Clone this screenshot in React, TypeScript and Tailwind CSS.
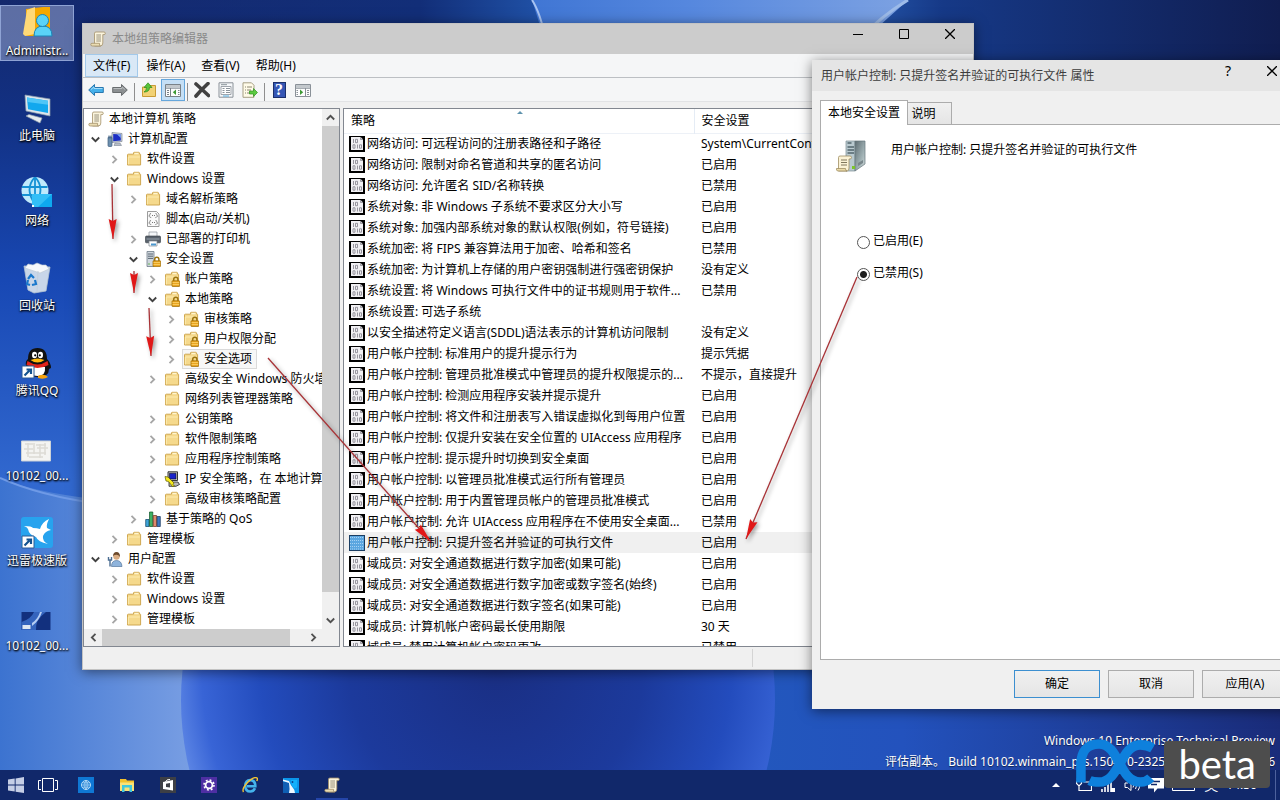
import { useState } from 'react'
import type { ReactNode } from 'react'
import clsx from 'clsx'

type IconName =
  | 'scroll'
  | 'computer'
  | 'user'
  | 'folder'
  | 'folderLock'
  | 'script'
  | 'printer'
  | 'server'
  | 'ipsec'
  | 'chart'

interface TreeNode {
  level: number
  label: string
  icon: IconName
  state?: 'open' | 'closed'
  selected?: boolean
}

const TREE: TreeNode[] = [
  { level: 0, label: '本地计算机 策略', icon: 'scroll' },
  { level: 1, label: '计算机配置', icon: 'computer', state: 'open' },
  { level: 2, label: '软件设置', icon: 'folder', state: 'closed' },
  { level: 2, label: 'Windows 设置', icon: 'folder', state: 'open' },
  { level: 3, label: '域名解析策略', icon: 'folder', state: 'closed' },
  { level: 3, label: '脚本(启动/关机)', icon: 'script' },
  { level: 3, label: '已部署的打印机', icon: 'printer', state: 'closed' },
  { level: 3, label: '安全设置', icon: 'server', state: 'open' },
  { level: 4, label: '帐户策略', icon: 'folderLock', state: 'closed' },
  { level: 4, label: '本地策略', icon: 'folderLock', state: 'open' },
  { level: 5, label: '审核策略', icon: 'folderLock', state: 'closed' },
  { level: 5, label: '用户权限分配', icon: 'folderLock', state: 'closed' },
  { level: 5, label: '安全选项', icon: 'folderLock', state: 'closed', selected: true },
  { level: 4, label: '高级安全 Windows 防火墙', icon: 'folder', state: 'closed' },
  { level: 4, label: '网络列表管理器策略', icon: 'folder' },
  { level: 4, label: '公钥策略', icon: 'folder', state: 'closed' },
  { level: 4, label: '软件限制策略', icon: 'folder', state: 'closed' },
  { level: 4, label: '应用程序控制策略', icon: 'folder', state: 'closed' },
  { level: 4, label: 'IP 安全策略，在 本地计算机', icon: 'ipsec', state: 'closed' },
  { level: 4, label: '高级审核策略配置', icon: 'folder', state: 'closed' },
  { level: 3, label: '基于策略的 QoS', icon: 'chart', state: 'closed' },
  { level: 2, label: '管理模板', icon: 'folder', state: 'closed' },
  { level: 1, label: '用户配置', icon: 'user', state: 'open' },
  { level: 2, label: '软件设置', icon: 'folder', state: 'closed' },
  { level: 2, label: 'Windows 设置', icon: 'folder', state: 'closed' },
  { level: 2, label: '管理模板', icon: 'folder', state: 'closed' },
]

const INDENT = ['pl-[3px]', 'pl-1', 'pl-[23px]', 'pl-[42px]', 'pl-[61px]', 'pl-[80px]']

const POLICIES: [string, string][] = [
  ['网络访问: 可远程访问的注册表路径和子路径', 'System\\CurrentControlSet'],
  ['网络访问: 限制对命名管道和共享的匿名访问', '已启用'],
  ['网络访问: 允许匿名 SID/名称转换', '已禁用'],
  ['系统对象: 非 Windows 子系统不要求区分大小写', '已启用'],
  ['系统对象: 加强内部系统对象的默认权限(例如，符号链接)', '已启用'],
  ['系统加密: 将 FIPS 兼容算法用于加密、哈希和签名', '已禁用'],
  ['系统加密: 为计算机上存储的用户密钥强制进行强密钥保护', '没有定义'],
  ['系统设置: 将 Windows 可执行文件中的证书规则用于软件...', '已禁用'],
  ['系统设置: 可选子系统', ''],
  ['以安全描述符定义语言(SDDL)语法表示的计算机访问限制', '没有定义'],
  ['用户帐户控制: 标准用户的提升提示行为', '提示凭据'],
  ['用户帐户控制: 管理员批准模式中管理员的提升权限提示的...', '不提示，直接提升'],
  ['用户帐户控制: 检测应用程序安装并提示提升', '已启用'],
  ['用户帐户控制: 将文件和注册表写入错误虚拟化到每用户位置', '已启用'],
  ['用户帐户控制: 仅提升安装在安全位置的 UIAccess 应用程序', '已启用'],
  ['用户帐户控制: 提示提升时切换到安全桌面', '已启用'],
  ['用户帐户控制: 以管理员批准模式运行所有管理员', '已启用'],
  ['用户帐户控制: 用于内置管理员帐户的管理员批准模式', '已启用'],
  ['用户帐户控制: 允许 UIAccess 应用程序在不使用安全桌面...', '已禁用'],
  ['用户帐户控制: 只提升签名并验证的可执行文件', '已启用'],
  ['域成员: 对安全通道数据进行数字加密(如果可能)', '已启用'],
  ['域成员: 对安全通道数据进行数字加密或数字签名(始终)', '已启用'],
  ['域成员: 对安全通道数据进行数字签名(如果可能)', '已启用'],
  ['域成员: 计算机帐户密码最长使用期限', '30 天'],
  ['域成员: 禁用计算机帐户密码更改', '已禁用'],
]
const SELECTED_POLICY = 19

/* ---------- small icons (16px) ---------- */

function Icon16({ children }: { children: ReactNode }) {
  return (
    <svg viewBox="0 0 16 16" className="h-4 w-4 shrink-0" aria-hidden="true">
      {children}
    </svg>
  )
}

function ScrollGlyph() {
  return (
    <>
      <path d="M4.5 2.2Q4.5 1 6 1H14q1.3 0 1.3 1.3T14 3.6h-1.2V12q0 3-2.6 3H4.5V2.2Z" fill="#fbf4dc" stroke="#a3906a" strokeWidth=".8" />
      <path d="M2 12.3h7.6q-.6 2.7 1 2.7H2.5Q.8 15 .8 13.6T2 12.3Z" fill="#eadcb2" stroke="#a3906a" strokeWidth=".8" />
      <path d="M6.3 4h4.7M6.3 6h4.7M6.3 8h4.7M6.3 10h4.7" stroke="#8d8672" strokeWidth=".9" />
    </>
  )
}

function FolderGlyph() {
  return (
    <>
      <path d="M1.5 14V4q0-.8.8-.8H7.5V2q0-.7.7-.7h4.5q.7 0 .7.7V3h.6q.6 0 .6.6V14Z" fill="#f5d98c" stroke="#cfa751" />
      <path d="M8.500 2.500h4" stroke="#fff5cf" strokeWidth="1.400" />
      <path d="M2.300 13.300V6h11.500" fill="none" stroke="#fdebb0" />
    </>
  )
}

function LockGlyph() {
  return (
    <>
      <path d="M9.700 10V8.500q0-2.200 2.100-2.200t2.100 2.200V10" fill="none" stroke="#9b7411" strokeWidth="1.500" />
      <rect x="8" y="9.800" width="7.600" height="5.700" rx=".5" fill="#e9a51e" stroke="#9c6a05" strokeWidth=".7" />
      <path d="M8.500 11.500h6.600M8.500 13.500h6.600" stroke="#ffd978" strokeWidth=".7" />
    </>
  )
}

function TreeIcon({ name }: { name: IconName }) {
  switch (name) {
    case 'scroll':
      return <Icon16><ScrollGlyph /></Icon16>
    case 'folder':
      return <Icon16><FolderGlyph /></Icon16>
    case 'folderLock':
      return <Icon16><FolderGlyph /><LockGlyph /></Icon16>
    case 'computer':
      return (
        <Icon16>
          <path d="M5 1.500 15 2.500V10.500L5 11.500Z" fill="#c9cfd8" stroke="#7c8694" strokeWidth=".7" />
          <path d="M6.200 3 13.800 3.500V9.500L6.200 10.200Z" fill="#1c2fc4" />
          <path d="M10 3.200 13.800 3.500V7Z" fill="#7fa8f5" />
          <path d="M8 12h5l1.500 2.500H7Z" fill="#b8bec8" stroke="#7c8694" strokeWidth=".6" />
          <rect x="1" y="6" width="4" height="9.500" rx="1" fill="#6d8fae" stroke="#3f5f80" strokeWidth=".7" />
          <path d="M2 4.500v3M4 4.500v3" stroke="#3f5f80" />
        </Icon16>
      )
    case 'user':
      return (
        <Icon16>
          <path d="M4.500 15.500q0-6 5-6t5.500 6Z" fill="#8fb4dc" stroke="#56779e" strokeWidth=".7" />
          <circle cx="9.500" cy="5.500" r="3.200" fill="#d9ac82" />
          <path d="M6 5.500Q6 1 9.500 1T13 6q-1.500-2.500-4-2.300T6 5.500Z" fill="#6d4a2c" />
          <path d="M1.500 6v3h3V6M3 9v6.500" fill="none" stroke="#4b6d92" strokeWidth="1.400" />
        </Icon16>
      )
    case 'script':
      return (
        <Icon16>
          <path d="M2.500.5h9l2.500 2.500v12.500H2.500Z" fill="#fafafa" stroke="#9c9c9c" />
          <path d="M7 4.500h3M7 11.500h3" stroke="#777" strokeDasharray="1 1" />
          <path d="M6 2.500q-1.500 0-1.200 1T4 4.700t.8 1.200T6 7M10.500 2.500q1.500 0 1.200 1t.8 1.200-.8 1.200-1.200 1.100M6 9.500q-1.500 0-1.200 1T4 11.700t.8 1.200T6 14M10.500 9.500q1.500 0 1.200 1t.8 1.200-.8 1.200-1.200 1.100" fill="none" stroke="#777" strokeWidth=".8" />
        </Icon16>
      )
    case 'printer':
      return (
        <Icon16>
          <path d="M4 1h8v5H4Z" fill="#f5f7f9" stroke="#8d949c" strokeWidth=".7" />
          <path d="M.5 6q0-1 1-1h13q1 0 1 1v5q0 .8-.8.8H1.300q-.8 0-.8-.8Z" fill="#59626c" stroke="#333a42" strokeWidth=".6" />
          <path d="M1.500 8h13" stroke="#9aa3ad" />
          <path d="M4 10h8v5H4Z" fill="#fff" stroke="#7f8791" strokeWidth=".7" />
          <path d="M6 12.500h5v2H6Z" fill="#4b97cf" />
        </Icon16>
      )
    case 'server':
      return (
        <Icon16>
          <path d="M2 .5h7v15H2Z" fill="#cfd6dc" stroke="#6f7c88" strokeWidth=".8" />
          <path d="M3 3h5M3 5.200h5M3 7.400h5" stroke="#4d5a66" strokeWidth=".9" />
          <circle cx="4" cy="13" r=".8" fill="#5cb04a" />
          <LockGlyph />
        </Icon16>
      )
    case 'ipsec':
      return (
        <Icon16>
          <path d="M4 .8h9.500V9.500H4Z" fill="#c6c6c6" stroke="#222" strokeWidth=".9" />
          <path d="M5.500 2.300H12V8H5.500Z" fill="#1a23c9" stroke="#000" strokeWidth=".5" />
          <path d="M5 11h9l1.500 2.500L12 15.300H5Z" fill="#b9b9b9" stroke="#222" strokeWidth=".8" />
          <path d="m1 5.500 3 .5 6 6-1 1.500 1.500 1.500-2 .5-4-5-2.500-.5Z" fill="#f7ea1f" stroke="#5d5900" strokeWidth=".7" />
        </Icon16>
      )
    case 'chart':
      return (
        <Icon16>
          <path d="M.7 8.500h3.300v7H.7Z" fill="#3fa7d8" stroke="#0d3f66" strokeWidth=".7" />
          <path d="M4.500 1h3.300v14.500H4.500Z" fill="#3fb264" stroke="#0c5227" strokeWidth=".7" />
          <path d="M8.300 4.500h3.300v11H8.300Z" fill="#dd8a6d" stroke="#6b2b17" strokeWidth=".7" />
          <path d="M12.100 5.500h3.200v10h-3.200Z" fill="#3c78c4" stroke="#123058" strokeWidth=".7" />
        </Icon16>
      )
  }
}

function PolicyIcon({ selected }: { selected: boolean }) {
  return (
    <svg viewBox="0 0 16 16" className="h-4 w-4 shrink-0" aria-hidden="true">
      <path d="M0 0h16v16H0Z" fill={selected ? '#1b3e63' : '#000'} />
      {selected ? (
        <>
          <path d="M1 1h14v14H1Z" fill="#5ba6e0" />
          <path d="M1 2.500h14M1 5.500h14M1 8.500h14M1 11.500h14M1 14h14" stroke="#a7d2f3" strokeDasharray="1 1" />
        </>
      ) : (
        <>
          <path d="M2 1h9.500L14 3.500V14H2Z" fill="#f1f0f3" />
          <path d="M11.500 1v2.500H14" fill="#c3c1c8" stroke="#77757d" strokeWidth=".6" />
          <path d="M4.500 3v4M6.500 3.300h2v3.400h-2ZM4 8.800h2v3.400H4ZM8.500 8.500v4M10.500 8.800h2v3.400h-2Z" fill="none" stroke="#8c8a94" strokeWidth=".9" />
        </>
      )}
    </svg>
  )
}

function Chevron({ dir, className }: { dir: 'up' | 'down' | 'left' | 'right'; className?: string }) {
  const d = {
    up: 'M.8 6.500 4.500 2.800 8.200 6.500',
    down: 'M.8 2.500 4.500 6.200 8.200 2.500',
    left: 'M6.500.8 2.800 4.500 6.500 8.200',
    right: 'M2.500.8l3.700 3.700L2.500 8.200',
  }[dir]
  return (
    <svg viewBox="0 0 9 9" className={clsx('h-[9px] w-[9px]', className)} aria-hidden="true">
      <path d={d} fill="none" stroke="currentColor" strokeWidth="1.800" />
    </svg>
  )
}

/* ---------- toolbar ---------- */

function ToolButton({ label, active, children }: { label: string; active?: boolean; children: ReactNode }) {
  return (
    <button
      type="button"
      aria-label={label}
      className={clsx(
        'flex h-[22px] w-6 items-center justify-center border',
        active ? 'border-[#66a7dc] bg-[#c5dff5]' : 'border-transparent',
      )}
    >
      {children}
    </button>
  )
}

function ToolSeparator() {
  return (
    <span className="flex h-[18px] w-[5px] justify-center">
      <span className="w-px bg-[#8f8f8f]" />
    </span>
  )
}

function Toolbar() {
  return (
    <div className="flex h-6 shrink-0 items-end border-b border-[#e2e3e5] bg-[#f5f6f7] pl-px">
      <ToolButton label="后退">
        <Icon16>
          <path d="M.7 8 6.500 2.500v3H15.300v5H6.500v3Z" fill="#45b0ea" stroke="#1b6da8" strokeWidth=".9" />
          <path d="M3 7.500 6 5v1.500h8.500" fill="none" stroke="#a5dcf8" />
        </Icon16>
      </ToolButton>
      <ToolButton label="前进">
        <Icon16>
          <path d="M15.300 8 9.500 2.500v3H.7v5h8.800v3Z" fill="#8c9092" stroke="#5f6365" strokeWidth=".9" />
          <path d="M13 7.500 10 5v1.500H1.500" fill="none" stroke="#b9bdbf" />
        </Icon16>
      </ToolButton>
      <ToolSeparator />
      <ToolButton label="上移">
        <Icon16>
          <path d="M1.500 14.500V5H7l1-1.500h6.500v11Z" fill="#f2d274" stroke="#c89b35" />
          <path d="M3 10q2.500-1 2.500-4.500H3L7 .8 11 5.500H8.500Q8.500 10 3 10Z" fill="#58c43a" stroke="#2b8a18" strokeWidth=".7" />
        </Icon16>
      </ToolButton>
      <ToolButton label="显示/隐藏控制台树" active>
        <Icon16>
          <path d="M.5 2.500h15v12H.5Z" fill="#fdfdfd" stroke="#7a8288" />
          <path d="M1 4h14M1 6.200h14" stroke="#8a939b" strokeWidth="1.200" />
          <path d="M5.500 6v8.500" stroke="#7a8288" />
          <path d="M2 8.500h2M2 10.500h2M2 12.500h2M13 8.500h1.500M13 10.500h1.500M13 12.500h1.500" stroke="#7a8288" />
          <path d="M11 7.500v5.500L7.800 10.200Z" fill="#3d9a34" />
        </Icon16>
      </ToolButton>
      <ToolSeparator />
      <ToolButton label="删除">
        <Icon16>
          <path d="M2 2q5 4.500 12.500 11.500M14 1.500Q7 8 2 14" fill="none" stroke="#414141" strokeWidth="3.600" strokeLinecap="round" />
        </Icon16>
      </ToolButton>
      <ToolButton label="属性">
        <Icon16>
          <path d="M1 .8h14v14.400H1Z" fill="#f6f8fa" stroke="#8a9198" />
          <path d="M3 4.500h10v8H3Z" fill="#fff" stroke="#8a9198" strokeWidth=".8" />
          <path d="M3 2.700h6M4.500 6.500h2M8 6.500h4M4.500 8.500h2M8 8.500h4M4.500 10.500h2M8 10.500h4" stroke="#6d7780" strokeWidth=".8" />
          <path d="M5 14h6" stroke="#56aee0" />
        </Icon16>
      </ToolButton>
      <ToolButton label="导出列表">
        <Icon16>
          <path d="M1 .8h8.500L12 3.300v12H1Z" fill="#fffbe8" stroke="#a69f84" />
          <path d="M3 5h1M5 5h5M3 8h1M5 8h4M3 11h1M5 11h4" stroke="#8b8671" />
          <path d="M7.500 9h4V6.500l4 4-4 4V12h-4Z" fill="#5ccb42" stroke="#2e921d" strokeWidth=".7" />
        </Icon16>
      </ToolButton>
      <ToolSeparator />
      <ToolButton label="帮助">
        <span className="flex h-4 w-[13px] items-center justify-center border border-[#1b2f6b] bg-[#3556b4] font-['Liberation_Serif',serif] text-base leading-4 font-bold text-white">
          ?
        </span>
      </ToolButton>
      <ToolButton label="显示/隐藏操作窗格">
        <Icon16>
          <path d="M.5 2.500h15v12H.5Z" fill="#fdfdfd" stroke="#8a9198" />
          <path d="M1 4h14M1 6.200h14" stroke="#8a939b" strokeWidth="1.200" />
          <path d="M10.500 6v8.500" stroke="#8a9198" />
          <path d="M12 8.500h2M12 10.500h2M12 12.500h2M1.500 8.500H3M1.500 10.500H3M1.500 12.500H3" stroke="#8a9198" />
          <path d="M5 7.500v5.500l3.200-2.800Z" fill="#3d9a34" />
        </Icon16>
      </ToolButton>
    </div>
  )
}

/* ---------- main window ---------- */

function TreePane() {
  return (
    <div className="flex w-[257px] shrink-0 flex-col border border-[#828790] bg-white">
      <div className="flex min-h-0 flex-1">
        <ul className="min-w-0 flex-1 overflow-hidden">
          {TREE.map((node, i) => (
            <li key={i} className={clsx('flex h-5 items-center whitespace-nowrap', INDENT[node.level])}>
              {node.level > 0 && (
                <span className="flex w-[18px] shrink-0 items-center pl-[3px]">
                  {node.state === 'open' && <Chevron dir="down" className="text-[#404040]" />}
                  {node.state === 'closed' && <Chevron dir="right" className="text-[#a6a6a6]" />}
                </span>
              )}
              <span
                className={clsx(
                  'flex h-5 items-center gap-[5px] border pr-1',
                  node.selected ? 'border-[#dadada] bg-[#f7f7f7]' : 'border-transparent',
                )}
              >
                <TreeIcon name={node.icon} />
                {node.label}
              </span>
            </li>
          ))}
        </ul>
        <div className="flex w-[17px] shrink-0 flex-col items-center bg-[#f0f0f0] text-[#505050]">
          <span className="flex h-[17px] items-center"><Chevron dir="up" /></span>
          <span className="min-h-0 w-full flex-[466] bg-[#cdcdcd]" />
          <span className="flex-[20]" />
          <span className="flex h-[17px] items-center"><Chevron dir="down" /></span>
        </div>
      </div>
      <div className="flex h-[17px] shrink-0 items-center bg-[#f0f0f0] pr-[17px] text-[#505050]">
        <span className="flex w-[18px] justify-center"><Chevron dir="left" /></span>
        <span className="h-full w-[188px] bg-[#cdcdcd]" />
        <span className="flex-1" />
        <span className="flex w-[17px] justify-center"><Chevron dir="right" /></span>
      </div>
    </div>
  )
}

function PolicyList() {
  return (
    <div className="relative min-w-0 flex-1 overflow-hidden border border-[#828790] bg-white">
      <table className="w-full table-fixed border-collapse text-left whitespace-nowrap">
        <colgroup>
          <col className="w-[350px]" />
          <col />
        </colgroup>
        <thead>
          <tr className="h-6 border-b border-[#edf1f7]">
            <th className="border-r border-[#e5ecf5] pl-[7px] font-normal">策略</th>
            <th className="pl-[7px] font-normal">安全设置</th>
          </tr>
        </thead>
        <tbody>
          {POLICIES.map(([name, value], i) => (
            <tr key={name} className={clsx('h-[21px]', i === SELECTED_POLICY && 'bg-[#f0f0f0]')}>
              <td className="pl-[5px]">
                <span className="flex items-center gap-0.5">
                  <PolicyIcon selected={i === SELECTED_POLICY} />
                  {name}
                </span>
              </td>
              <td className="pl-[7px]">{value}</td>
            </tr>
          ))}
        </tbody>
      </table>
      <svg viewBox="0 0 6 3" className="absolute top-0.5 left-[173px] h-[3px] w-1.5" aria-hidden="true">
        <path d="M0 3 3 0l3 3Z" fill="#5f93ad" />
      </svg>
    </div>
  )
}

function EditorWindow() {
  return (
    <section
      aria-label="本地组策略编辑器"
      className="absolute top-[23px] right-[306px] bottom-[130px] left-[82px] flex flex-col border border-[#c3c3c3] bg-[#f0f0f0] shadow-[0_2px_12px_rgba(0,0,0,0.5)]"
    >
      <header className="flex h-[30px] shrink-0 items-start justify-between bg-[#cccccc]">
        <div className="flex h-[30px] items-center gap-1.5 pl-[7px] text-[#8a8a8a]">
          <TreeIcon name="scroll" />
          本地组策略编辑器
        </div>
        <div className="flex h-5 text-black">
          <button type="button" aria-label="最小化" className="flex w-[46px] items-center justify-center">
            <svg viewBox="0 0 10 10" className="h-2.5 w-2.5"><path d="M0 5.500h10" stroke="currentColor" /></svg>
          </button>
          <button type="button" aria-label="最大化" className="flex w-[46px] items-center justify-center">
            <svg viewBox="0 0 10 10" className="h-2.5 w-2.5"><path d="M.5.5h9v9h-9Z" fill="none" stroke="currentColor" /></svg>
          </button>
          <button type="button" aria-label="关闭" className="flex w-[46px] items-center justify-center">
            <svg viewBox="0 0 10 10" className="h-2.5 w-2.5"><path d="m0 0 10 10M10 0 0 10" stroke="currentColor" strokeWidth="1.300" /></svg>
          </button>
        </div>
      </header>
      <nav className="flex h-6 shrink-0 border-b border-[#bcbfc3] bg-[#f5f6f7] pl-0.5">
        {['文件(F)', '操作(A)', '查看(V)', '帮助(H)'].map((item, i) => (
          <button
            key={item}
            type="button"
            className={clsx('border px-[7px]', i === 0 ? 'border-[#a3c9ea] bg-[#d9e8f6]' : 'border-transparent')}
          >
            {item}
          </button>
        ))}
      </nav>
      <Toolbar />
      <div className="mt-1.5 flex min-h-0 flex-1 gap-[3px]">
        <TreePane />
        <PolicyList />
      </div>
      <footer className="flex h-[22px] shrink-0 justify-end py-0.5">
        <span className="w-[221px] border-l border-[#d4d4d4]" />
      </footer>
    </section>
  )
}

/* ---------- properties dialog ---------- */

function ServerIcon() {
  return (
    <svg viewBox="0 0 32 32" className="h-8 w-8 shrink-0" aria-hidden="true">
      <defs>
        <linearGradient id="serverSide" x1="0" x2="1" y1="0" y2="1">
          <stop offset="0" stopColor="#5d6c72" />
          <stop offset=".6" stopColor="#9fb0b3" />
          <stop offset="1" stopColor="#d3dcdd" />
        </linearGradient>
      </defs>
      <path d="M10 1h9v30h-9Z" fill="#b9c9cf" stroke="#7c8d94" strokeWidth=".7" />
      <path d="M19 1h10v23l-10 7Z" fill="url(#serverSide)" stroke="#66757b" strokeWidth=".7" />
      <path d="M11.500 3h4M11.500 7h6.500M11.500 10h6.500M11.500 13h6.500" stroke="#53656e" strokeWidth="1.300" />
      <path d="M22 26v-3l5-3v3Z" fill="#78868b" />
      <path d="M16 26h3v3h-3Z" fill="#7cc52a" />
      <path d="M2.500 17.500q0-1.500 1.500-1.500h10q1.500 0 1.500 1.500T14 19h-1v9q0 3-2 3H2.500Z" fill="#fbf2d5" stroke="#a08e62" strokeWidth=".8" />
      <path d="M.5 28.500h9q0 2.500 1.500 2.500H1.500Q0 30 .5 28.500Z" fill="#ead9a6" stroke="#a08e62" strokeWidth=".8" />
      <path d="M5 20h6M5 22.500h6M5 25h6" stroke="#80775c" />
    </svg>
  )
}

function PropertiesDialog() {
  const [choice, setChoice] = useState('disabled')
  const options = [
    { id: 'enabled', label: '已启用(E)' },
    { id: 'disabled', label: '已禁用(S)' },
  ]
  return (
    <section
      role="dialog"
      aria-label="属性"
      className="absolute top-[60px] -right-4 bottom-[91px] left-[812px] flex flex-col bg-[#f0f0f0] shadow-[0_2px_12px_rgba(0,0,0,0.5)]"
    >
      <header className="flex h-[31px] shrink-0 items-start justify-between bg-[#e5e5e5]">
        <h2 className="pl-[9px] leading-[31px] text-[#3c3c3c]">用户帐户控制: 只提升签名并验证的可执行文件 属性</h2>
        <div className="flex h-[22px] text-black">
          <button type="button" aria-label="帮助" className="w-10 text-sm leading-[22px]">?</button>
          <button type="button" aria-label="关闭" className="flex w-12 items-center justify-center">
            <svg viewBox="0 0 10 10" className="h-2.5 w-2.5"><path d="m0 0 10 10M10 0 0 10" stroke="currentColor" strokeWidth="1.300" /></svg>
          </button>
        </div>
      </header>
      <div role="tablist" className="flex items-end px-2 pt-[9px]">
        <button type="button" role="tab" aria-selected="true" className="relative -mb-px h-[25px] w-[88px] border border-b-0 border-[#acacac] bg-white">
          本地安全设置
        </button>
        <button type="button" role="tab" aria-selected="false" className="h-[22px] w-11 border border-b-0 border-l-0 border-[#acacac] bg-linear-to-b from-[#f0f0f0] to-[#e5e5e5] pr-3">
          说明
        </button>
      </div>
      <div role="tabpanel" className="mx-2 flex-1 border border-[#acacac] bg-white pt-[15px]">
        <div className="flex gap-[23px] pl-[15px]">
          <ServerIcon />
          <p className="leading-5">用户帐户控制: 只提升签名并验证的可执行文件</p>
        </div>
        <div role="radiogroup" className="mt-[61px] flex flex-col items-start gap-4 pl-9">
          {options.map((o) => (
            <label key={o.id} className="flex h-4 items-center gap-[3px]">
              <input
                type="radio"
                name="policy"
                value={o.id}
                checked={choice === o.id}
                onChange={() => setChoice(o.id)}
                className="mt-0.5 h-[13px] w-[13px] appearance-none rounded-full border border-[#555] bg-white checked:bg-[radial-gradient(circle,#1e1e1e_3px,#fff_4px)]"
              />
              {o.label}
            </label>
          ))}
        </div>
      </div>
      <div className="flex justify-end gap-2 px-2 pt-2.5 pb-[11px]">
        {['确定', '取消', '应用(A)'].map((label, i) => (
          <button
            key={label}
            type="button"
            className={clsx(
              'h-7 w-[86px] border bg-linear-to-b from-[#f0f0f0] to-[#e5e5e5]',
              i === 0 ? 'border-[#3c8fd0]' : 'border-[#acacac]',
            )}
          >
            {label}
          </button>
        ))}
      </div>
    </section>
  )
}

/* ---------- desktop ---------- */

function Wallpaper() {
  return (
    <svg viewBox="0 0 1280 800" preserveAspectRatio="none" className="absolute inset-0 h-full w-full" aria-hidden="true">
      <defs>
        <linearGradient id="sky" x1="0" x2="0" y1="0" y2="1">
          <stop offset="0" stopColor="#14286c" />
          <stop offset=".15" stopColor="#123184" />
          <stop offset=".35" stopColor="#1848b4" />
          <stop offset=".6" stopColor="#3168cf" />
          <stop offset="1" stopColor="#3a70cf" />
        </linearGradient>
        <linearGradient id="skyTop" x1="0" x2="1" y1="0" y2="0">
          <stop offset="0" stopColor="#14307c" stopOpacity="0" />
          <stop offset=".75" stopColor="#122e78" />
          <stop offset="1" stopColor="#2257ae" />
        </linearGradient>
        <linearGradient id="beam" x1="0" x2="1" y1="0" y2="0">
          <stop offset="0" stopColor="#4076d4" />
          <stop offset=".4" stopColor="#5587de" />
          <stop offset="1" stopColor="#7da2e2" />
        </linearGradient>
        <linearGradient id="night" x1="0" x2="1" y1="0" y2="0">
          <stop offset="0" stopColor="#2b62b8" />
          <stop offset=".25" stopColor="#163987" />
          <stop offset="1" stopColor="#101d50" />
        </linearGradient>
        <linearGradient id="mist" x1="0" x2="1" y1="0" y2="0">
          <stop offset="0" stopColor="#3c73d0" />
          <stop offset="1" stopColor="#7ba0e4" />
        </linearGradient>
        <linearGradient id="east" x1="0" x2="1" y1="0" y2="0">
          <stop offset="0" stopColor="#2259bd" />
          <stop offset=".35" stopColor="#2352bd" />
          <stop offset="1" stopColor="#1a2c7a" />
        </linearGradient>
        <radialGradient id="orb" cx=".53" cy=".45" r=".55">
          <stop offset="0" stopColor="#1a2f84" />
          <stop offset=".45" stopColor="#1c3a9c" />
          <stop offset=".72" stopColor="#234cbd" />
          <stop offset=".9" stopColor="#3864d6" />
          <stop offset="1" stopColor="#6089e6" />
        </radialGradient>
      </defs>
      <path d="M0 0h1280v800H0Z" fill="url(#sky)" />
      <path d="M0 0h560v60H0Z" fill="url(#skyTop)" />
      <path d="M532 0h380l-80 90H560Z" fill="url(#beam)" />
      <path d="M532 0q8 12 14 40" fill="none" stroke="#a7c3f2" strokeWidth="2" />
      <path d="M908 0h372v400H830V70Z" fill="url(#night)" />
      <path d="M908 0q-24 14-50 40" fill="none" stroke="#9dbbe9" strokeWidth="3" />
      <path d="M0 478q50 22 200 30v292H0Z" fill="url(#mist)" />
      <path d="M0 478q40 18 100 26" fill="none" stroke="#6f9ae6" strokeWidth="2" />
      <path d="M700 640h580v160H700Z" fill="url(#east)" />
      <circle cx="478" cy="700" r="297" fill="url(#orb)" />
    </svg>
  )
}

function Shortcut() {
  return (
    <>
      <path d="M1 19h12v12H1Z" fill="#fff" stroke="#2a5b95" />
      <path d="m3.500 28.500 5-5M5.500 22.500h4.500V27" fill="none" stroke="#14528f" strokeWidth="2.200" />
    </>
  )
}

const DESKTOP_ICONS: { label: string; selected?: boolean; art: ReactNode }[] = [
  {
    label: 'Administr...',
    selected: true,
    art: (
      <>
        <path d="M5 2 22 0h7v27l-4 2H5Z" fill="#f5a800" />
        <path d="M2 27 6 3l8-3v27l-10 2Z" fill="#ffd977" />
        <path d="M13 29q0-10 9-10t9 10Z" fill="#5ad3f7" stroke="#1a86b8" />
        <circle cx="21.500" cy="13.500" r="6" fill="#5ad3f7" stroke="#1a86b8" />
      </>
    ),
  },
  {
    label: '此电脑',
    art: (
      <>
        <path d="m4 3 25 4v17L5 19Z" fill="#dce5ec" stroke="#8b9cab" strokeWidth=".7" />
        <path d="m6 5.500 21 3.300V21L7 17.200Z" fill="#12a8ee" />
        <path d="m6 5.500 21 3.300v4L6.500 10Z" fill="#4fc6f7" />
        <path d="m5 24 3-1.500L21 26l-2 5Z" fill="#e6ebef" stroke="#8b9cab" strokeWidth=".7" />
      </>
    ),
  },
  {
    label: '网络',
    art: (
      <>
        <circle cx="14" cy="13.500" r="13.500" fill="#bfeafc" />
        <path d="M1 10h25.500M1 18h25.500M14 0v27M14 0Q3 12 14 27M14 0q11 12 0 27" fill="none" stroke="#1692d4" strokeWidth="1.800" />
        <path d="M11 17h20v13H11Z" fill="#0ea9f0" />
        <path d="M11 17h20L17 30h-6Z" fill="#33bff7" />
        <path d="M11 28h2v2h-2Z" fill="#fff" />
      </>
    ),
  },
  {
    label: '回收站',
    art: (
      <>
        <path d="m3 4 26 1-4 24-12 2-6-3Z" fill="#dbe5ee" fillOpacity=".9" stroke="#b6c5d3" strokeWidth=".8" />
        <path d="m4 6 3-4 5 1 4-2 5 2 4 0 3 4-9 4Z" fill="#f7f9fb" stroke="#bcc8d2" strokeWidth=".6" />
        <path d="m17 9-1 21" stroke="#c3d0dc" />
        <path d="m7 17 3-4 3 3M14 18l1 4-4 1M9 23l-3-1 1-4" fill="none" stroke="#1a78cc" strokeWidth="2.200" />
      </>
    ),
  },
  {
    label: '腾讯QQ',
    art: (
      <>
        <path d="M5 19Q4 14 7 12 7 1 16.500 1T26 12q4 4 4 9l-2 1q0 8-11 8T6 21Z" fill="#111" />
        <path d="M9 20h15q1 9-7.500 9T9 20Z" fill="#fff" />
        <ellipse cx="13.500" cy="8" rx="2.500" ry="3.300" fill="#fff" />
        <ellipse cx="19.500" cy="8" rx="2.500" ry="3.300" fill="#fff" />
        <circle cx="14.200" cy="8.300" r="1.100" />
        <circle cx="18.800" cy="8.300" r="1.100" />
        <path d="M9.500 13q7-3 14 0-7 5-14 0Z" fill="#ffb80d" />
        <path d="M6.500 14q10 7 20 0l1 4q-11 6-22 0Z" fill="#e2231a" />
        <path d="M17 29q6-3 10 1-4 3-10 1Z" fill="#f7a30c" />
        <Shortcut />
      </>
    ),
  },
  {
    label: '10102_00...',
    art: (
      <>
        <path d="M.5 9h29v20H.5Z" fill="#f4f4f2" stroke="#cdd3d8" />
        <path d="M4 12h8M15 13h10M3 17h9M16 16h11M5 21h20M8 25h14M7 11v14M13 11v11M19 12v14M24 11v12" stroke="#dcdad5" strokeWidth="1.500" />
      </>
    ),
  },
  {
    label: '迅雷极速版',
    art: (
      <>
        <rect x="0" y="0" width="32" height="31" rx="3" fill="#27a3ee" />
        <path d="M3 9q8 0 9 2 4 0 7 1Q21 5 28 2q-3 6-2 9l4 2q-6 1-8 6-1 5 5 8-10-2-12-7-7-2-8-8Q6 10 3 9Z" fill="#fff" />
        <Shortcut />
      </>
    ),
  },
  {
    label: '10102_00...',
    art: (
      <>
        <path d="M.5 10h29v18H.5Z" fill="#12307e" />
        <path d="M.5 20Q10 17 13 10h12q-11 8-10 18H.5Z" fill="#3564bd" />
        <path d="M11 21q6-4 8-11h2q-3 9-10 14Z" fill="#b6cdf3" />
        <path d="M1.500 23h8v4h-8Z" fill="#dfe7f2" />
      </>
    ),
  },
]

function DesktopIcons() {
  return (
    <div className="relative flex w-[74px] flex-col gap-[29px] pt-[5px]">
      {DESKTOP_ICONS.map((item, i) => (
        <button
          key={i}
          type="button"
          className={clsx(
            'flex h-14 flex-col items-center justify-between border py-px text-white',
            item.selected ? 'border-[#8fa3d4] bg-[#8d9cc8]/60' : 'border-transparent',
          )}
        >
          <svg viewBox="0 0 32 32" className="h-8 w-8 shrink-0" aria-hidden="true">{item.art}</svg>
          <span className="leading-4 whitespace-nowrap [text-shadow:0_1px_2px_#000,1px_1px_2px_#000]">{item.label}</span>
        </button>
      ))}
    </div>
  )
}

const APPS: { label: string; active?: boolean; art: ReactNode }[] = [
  {
    label: 'Spartan',
    art: (
      <>
        <path d="M0 0h16v16H0Z" fill="#0f78d4" />
        <circle cx="8" cy="8" r="4.500" fill="none" stroke="#b9ddf7" />
        <path d="M3.500 8h9M8 3.500v9M8 3.500q-4 4.500 0 9M8 3.500q4 4.500 0 9M4.300 5.800h7.400M4.300 10.200h7.400" fill="none" stroke="#b9ddf7" strokeWidth=".7" />
      </>
    ),
  },
  {
    label: '文件资源管理器',
    art: (
      <>
        <path d="M1 2h6l1 1.500h7V14H1Z" fill="#f3c12c" />
        <path d="M1 5.500h14V14H1Z" fill="#fbe277" />
        <path d="M3 8h10v7h-2.500v-4.500h-5V15H3Z" fill="#3fc8dd" />
      </>
    ),
  },
  {
    label: '应用商店',
    art: (
      <>
        <path d="M0 0h16v16H0Z" fill="#3d3f45" />
        <path d="m3 5 10-2v10.500L3 12Z" fill="#fff" />
        <path d="M5.500 5q1-3 4.500-2.500" fill="none" stroke="#fff" />
        <path d="m6 6.700 4-.6v4.400l-4-.6Z" fill="#3d3f45" />
      </>
    ),
  },
  {
    label: '设置',
    art: (
      <>
        <path d="M0 0h16v16H0Z" fill="#4e2fa3" />
        <circle cx="8" cy="8" r="3.400" fill="none" stroke="#fff" strokeWidth="1.800" />
        <circle cx="8" cy="8" r="5" fill="none" stroke="#fff" strokeWidth="1.600" strokeDasharray="1.900 2.027" />
      </>
    ),
  },
  {
    label: 'Internet Explorer',
    art: (
      <>
        <path d="M13 11.300q-1.500 3.200-4.700 3.200-5 0-5-5.700t5-5.700q5 0 5 6.200H5" fill="none" stroke="#45b4ec" strokeWidth="2.600" />
        <path d="M1.500 15Q-.5 12 5.500 5.500 12-.8 15 1q1 .9-.3 3" fill="none" stroke="#f5c431" strokeWidth="1.400" />
      </>
    ),
  },
  {
    label: '迅雷',
    art: (
      <>
        <path d="M0 1h16v15H0Z" fill="#0a95ea" />
        <path d="M0 5 6 5l1 4 2 3-2 4H0Z" fill="#0f5fb4" />
        <path d="M0 2.500 6 4q1.500 4 4 7 2 2 2 5H6q1-4 0-10L0 4Z" fill="#eef8ff" />
        <path d="M8 3h6v7q-1 2-3 1-3-3-3-8Z" fill="#12b0fb" />
        <circle cx="9.500" cy="5" r=".9" fill="#0d3d8b" />
      </>
    ),
  },
  { label: '本地组策略编辑器', active: true, art: <ScrollGlyph /> },
]

function Taskbar() {
  return (
    <footer className="absolute inset-x-0 bottom-0 flex h-[30px] items-stretch justify-between bg-[#11286a] text-white">
      <div className="flex">
        <button type="button" aria-label="开始" className="flex w-8 items-center justify-center">
          <Icon16>
            <path d="M0 2.500 6.700 1.500V7.600H0ZM7.600 1.400 16 0v7.600H7.600ZM0 8.400h6.700v6.100L0 13.500ZM7.600 8.400H16V16l-8.400-1.300Z" fill="#c5cee6" />
          </Icon16>
        </button>
        <button type="button" aria-label="任务视图" className="flex w-8 items-center justify-center">
          <svg viewBox="0 0 20 14" className="h-3.5 w-5" aria-hidden="true">
            <path d="M4.500.5h11v13h-11ZM3 2.500H.5v9H3M17 2.500h2.500v9H17" fill="none" stroke="#fff" />
          </svg>
        </button>
        <div className="flex gap-px pl-0.5">
          {APPS.map((app) => (
            <button
              key={app.label}
              type="button"
              aria-label={app.label}
              className="flex w-10 justify-center"
            >
              <span
                className={clsx(
                  'flex h-full w-8 items-center justify-center border-y-2 border-transparent',
                  app.active && 'border-b-[#2445a8]',
                )}
              >
                <Icon16>{app.art}</Icon16>
              </span>
            </button>
          ))}
        </div>
      </div>
      <div className="flex items-center gap-2 pr-1">
        <svg viewBox="0 0 8 4" className="mr-2 h-1 w-2" aria-hidden="true"><path d="M0 4 4 0l4 4Z" fill="#fff" /></svg>
        <Icon16>
          <path d="M1.500 1v3M4.500 1v3M.5 4.500h5v2L3 9 .5 6.500ZM3 9v4.500h12.500V5H7.500" fill="none" stroke="#fff" strokeWidth="1.200" />
        </Icon16>
        <Icon16>
          <path d="M2 15v-3M5 15v-5M8 15V7M11 15V4" stroke="#fff" strokeWidth="1.600" />
          <path d="M11 11h4v4h-4Z" fill="#fff" />
        </Icon16>
        <Icon16>
          <path d="M1 6h2.500L7 3v10.500L3.500 10.500H1ZM9 6q1.500 2 0 4.500M11.500 4.500q2.500 3.500 0 7.500M14 3q3.500 5 0 10.500" fill="none" stroke="#fff" />
        </Icon16>
        <Icon16>
          <path d="M0 1h16v10.500H9.500L6 15.500v-4H0Z" fill="#fff" />
          <path d="M3 4.500h9M3 7.500h6" stroke="#11286a" strokeWidth="1.300" />
        </Icon16>
        <svg viewBox="0 0 24 14" className="h-3.5 w-6" aria-hidden="true">
          <path d="M.5 1.500h22v11H.5Z" fill="none" stroke="#fff" />
          <path d="M3 4.500h17M3 7h17M6 9.500h11" stroke="#fff" strokeDasharray="1.500 1.500" />
        </svg>
        <span className="text-sm">英</span>
        <span className="pr-2.5">14:36</span>
        <span className="h-full w-px bg-[#4d629d]" />
      </div>
    </footer>
  )
}

function BuildInfo() {
  return (
    <div className="absolute right-[5px] bottom-[28px] flex flex-col items-end leading-[21px] whitespace-nowrap text-white [text-shadow:0_1px_1px_#0008]">
      <p>Windows 10 Enterprise Technical Preview</p>
      <p>评估副本。 Build 10102.winmain_prs.150410-2325.7eb7ce5e62d1f8a6</p>
    </div>
  )
}

function BetaLogo() {
  return (
    <div className="absolute right-2.5 bottom-3 flex items-end gap-2">
      <svg viewBox="835 298 243 150" className="h-[50px] w-20" aria-hidden="true">
        <path
          d="M850 432V380Q850 315 905 315C968 315 965 431 1030 431Q1050 431 1062 418M876 426Q886 431 905 431C968 431 970 318 1030 318Q1052 318 1068 328"
          fill="none"
          stroke="#0e80dc"
          strokeWidth="29"
        />
      </svg>
      <span className="h-[47px] rounded bg-[#4d4d4d] px-3.5 font-['Lato','Open_Sans',sans-serif] text-[40px] leading-[46px] text-white">
        beta
      </span>
    </div>
  )
}

/* ---------- red pointer arrows ---------- */

const ARROWS = [
  { from: [112, 184], to: [113, 239] },
  { from: [134, 271], to: [134, 293] },
  { from: [149, 308], to: [151, 356] },
  { from: [268, 358], to: [431, 542] },
  { from: [857, 277], to: [746, 539] },
]

function Arrows() {
  return (
    <svg className="pointer-events-none absolute inset-0 h-full w-full drop-shadow-[2px_2px_2px_rgba(0,0,0,0.4)]" aria-hidden="true">
      {ARROWS.map(({ from, to }, i) => {
        const angle = (Math.atan2(to[1] - from[1], to[0] - from[0]) * 180) / Math.PI
        return (
          <g key={i}>
            <line x1={from[0]} y1={from[1]} x2={to[0]} y2={to[1]} stroke="#a83236" strokeWidth="1.300" />
            <path d="M0 0-20-4-18 0-20 4Z" fill="#e01818" transform={`translate(${to[0]} ${to[1]}) rotate(${angle})`} />
          </g>
        )
      })}
    </svg>
  )
}

export default function App() {
  return (
    <main className="relative h-screen overflow-hidden bg-[#1a3f9e] font-['Noto_Sans','Noto_Sans_CJK_SC',sans-serif] text-xs text-black">
      <Wallpaper />
      <DesktopIcons />
      <BuildInfo />
      <EditorWindow />
      <PropertiesDialog />
      <Taskbar />
      <Arrows />
      <BetaLogo />
    </main>
  )
}
